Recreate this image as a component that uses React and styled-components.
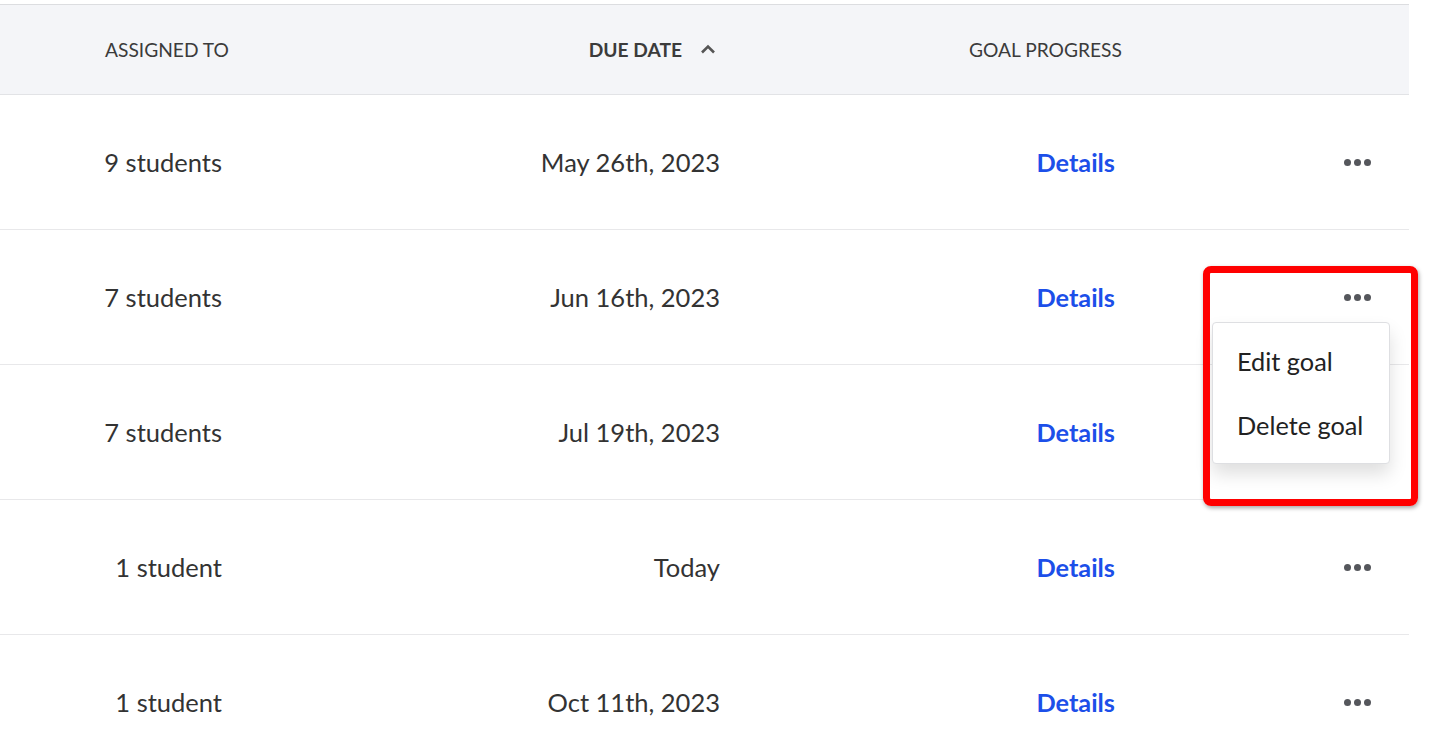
import styled, { createGlobalStyle } from "styled-components"

const GlobalStyle = createGlobalStyle`
    body {
        margin: 0;
        background: #fff;
        font-family: Lato, "Open Sans", sans-serif;
        overflow: hidden;
    }
`;

const Page = styled.div`
    width: 1448px;
    height: 756px;
    padding-top: 4px;
    box-sizing: border-box;
    overflow: hidden;
`;

const Table = styled.div`
    width: 1409px;
    border-top: 1px solid #dcdde0;
`;

const Cols = "222px 498px 395px 1fr";

const HeadRow = styled.div`
    display: grid;
    grid-template-columns: ${Cols};
    height: 89px;
    align-items: center;
    background: #f4f5f8;
    border-bottom: 1px solid #e2e3e6;
`;

const HeadCell = styled.div`
    font-size: 19.2px;
    color: #3b3b3b;
    white-space: nowrap;
    font-weight: ${(p) => (p.$active ? 700 : 400)};
    padding-left: ${(p) => p.$pl || 0}px;
    padding-right: ${(p) => p.$pr || 0}px;
    display: flex;
    align-items: center;
    justify-content: ${(p) => (p.$align === "right" ? "flex-end" : "flex-start")};
    gap: 18px;
    margin-top: -1px;
`;

const Row = styled.div`
    display: grid;
    grid-template-columns: ${Cols};
    height: 135px;
    align-items: center;
    border-bottom: 1px solid #e8e8ea;
    box-sizing: border-box;
    position: relative;
`;

const Cell = styled.div`
    font-size: 25.5px;
    color: #333;
    text-align: right;
    white-space: nowrap;
    margin-top: -1px;
`;

const DetailsLink = styled.a`
    font-size: 25.3px;
    font-weight: 700;
    color: #1c4fe9;
    text-decoration: none;
    text-align: right;
    cursor: pointer;
    margin-top: -1px;
`;

const ActionCell = styled.div`
    position: relative;
    display: flex;
    justify-content: flex-end;
    padding-right: 38px;
`;

const MoreButton = styled.button`
    border: 0;
    background: none;
    padding: 0;
    display: flex;
    gap: 3px;
    cursor: pointer;
`;

const Dot = styled.span`
    width: 7px;
    height: 7px;
    border-radius: 50%;
    background: #55575c;
`;

const Menu = styled.div`
    position: absolute;
    top: 28px;
    right: 19px;
    width: 178px;
    padding: 6px 0;
    background: #fff;
    border: 1px solid #dedfe2;
    border-radius: 4px;
    box-shadow: 0 10px 18px rgba(0, 0, 0, 0.13);
    box-sizing: border-box;
    z-index: 2;
`;

const MenuItem = styled.div`
    font-size: 25.3px;
    color: #222;
    padding: 0 24px;
    height: 64px;
    display: flex;
    align-items: center;
    white-space: nowrap;
`;

const Highlight = styled.div`
    position: absolute;
    left: 1203px;
    top: 36px;
    width: 215px;
    height: 240px;
    border: 7px solid #ff0000;
    border-radius: 8px;
    box-sizing: border-box;
    box-shadow: 1px 2px 4px rgba(0, 0, 0, 0.35);
    z-index: 3;
    pointer-events: none;
`;

const Chevron = () => (
    <svg width="16" height="10" viewBox="0 0 16 10">
        <path d="M2 8.5 L8 2.5 L14 8.5" fill="none" stroke="#555" strokeWidth="2.6" />
    </svg>
);

const goals = [
    { assigned: "9 students", due: "May 26th, 2023" },
    { assigned: "7 students", due: "Jun 16th, 2023", open: true },
    { assigned: "7 students", due: "Jul 19th, 2023" },
    { assigned: "1 student", due: "Today" },
    { assigned: "1 student", due: "Oct 11th, 2023" },
];

const App = () => {
    return (
        <Page>
            <GlobalStyle />
            <Table>
                <HeadRow>
                    <HeadCell $pl={105}>ASSIGNED TO</HeadCell>
                    <HeadCell $align="right" $pr={4} $active>
                        DUE DATE <Chevron />
                    </HeadCell>
                    <HeadCell $pl={249}>GOAL PROGRESS</HeadCell>
                    <div />
                </HeadRow>
                {goals.map((g, i) => (
                    <Row key={i}>
                        <Cell>{g.assigned}</Cell>
                        <Cell>{g.due}</Cell>
                        <DetailsLink>Details</DetailsLink>
                        <ActionCell>
                            <MoreButton>
                                <Dot />
                                <Dot />
                                <Dot />
                            </MoreButton>
                            {g.open && (
                                <Menu>
                                    <MenuItem>Edit goal</MenuItem>
                                    <MenuItem>Delete goal</MenuItem>
                                </Menu>
                            )}
                        </ActionCell>
                        {g.open && <Highlight />}
                    </Row>
                ))}
            </Table>
        </Page>
    )
}

export default App;
